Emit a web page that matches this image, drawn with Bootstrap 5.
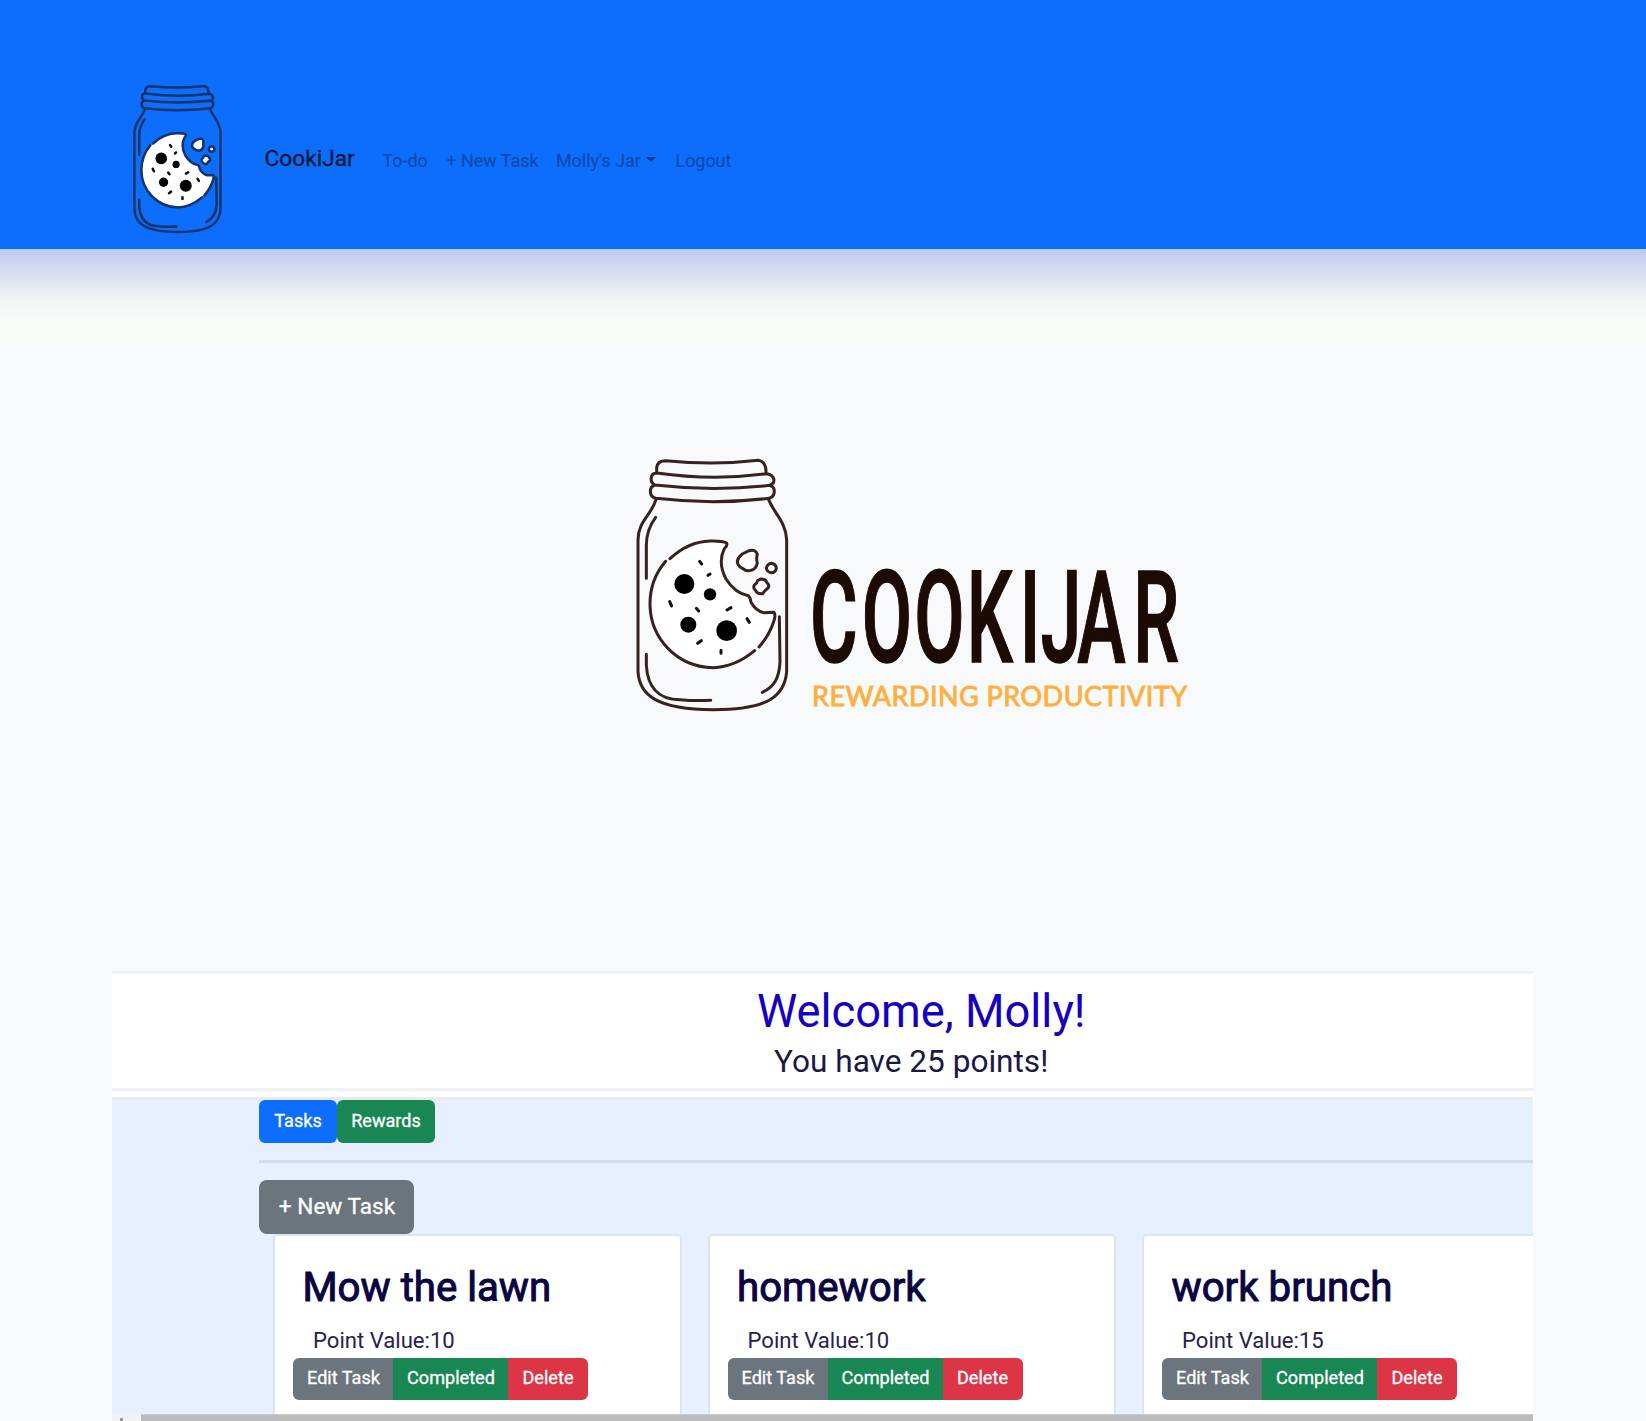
<!DOCTYPE html>
<html lang="en">
<head>
<meta charset="utf-8">
<title>CookiJar</title>
<link href="https://cdn.jsdelivr.net/npm/bootstrap@5.3.0/dist/css/bootstrap.min.css" rel="stylesheet">
<style>
body{font-family:Roboto,"Liberation Sans",sans-serif;background:#f8f9fb;width:1646px;height:1421px;overflow:hidden}
.topbar{height:249px;background:#0d6efd;padding:77px 0 0 124px}
.nav-jar{width:110px;height:164px;color:#173468;--cookie:#fff;--line:13px}
.topbar .navbar-brand{font-size:22.7px;color:#06183a;-webkit-text-stroke:.4px #06183a;margin:0 0 0 30.5px;padding:0;width:118px}
.topbar .nav-link{font-size:17.9px;color:#0c4aae;-webkit-text-stroke:.2px #0c4aae;padding:4px 0 0;white-space:nowrap}
.topbar .nav-link.dropdown-toggle::after{margin-left:5px;border-top-color:#0a3a8c;vertical-align:.25em}
.nav-todo{width:64px}.nav-new{width:109.5px}.nav-jarmenu{width:119.5px}
.shade{height:101px;background:linear-gradient(#c0c9ee 0,#dbe0f2 27%,#e9edf3 40%,#f3f5f6 54%,#f8faf8 68%,#f8faf8 88%,#f8f9fb 100%)}
.hero{height:621px;padding:95px 0 0 620px}
.hero-jar{width:190px;height:280px;color:#35231f;--cookie:#fff;--line:9px}
.wordmark{width:420px;height:190px;margin:95px 0 0 -20px}
.panel{width:1421px;height:450px;margin-left:112px;overflow:hidden}
.welcome{height:117px;border-top:3px solid #eff0f1;background:#fff;padding-top:13px}
.welcome h1{font-size:45.3px;line-height:50px;color:#1602bd;font-weight:400;margin:0 0 6px 645px}
.welcome p{font-size:31.6px;line-height:38px;color:#1c1844;margin:0 0 0 662px}
.divider{height:12px;background:#fdfdfd;border-top:3px solid #eff1f3;border-bottom:3px solid #e7ebf1}
.tasks{height:314px;background:#e6f0ff;padding-left:147px;overflow:hidden}
.tasks .btn{border:0;font-size:18.1px;line-height:40px;height:43px;padding:0 0 2px;border-radius:6px;-webkit-text-stroke:.3px #fff}
.tasks .b-tasks{width:78px}.tasks .b-rewards{width:98px}
.tasks hr{margin:17px 0;border:0;height:3px;background:#d2dded;opacity:1}
.tasks .b-new{display:block;width:155px;height:54px;font-size:22.6px;line-height:53px;border-radius:8px;padding-left:1px}
.deck{gap:26px;padding-left:14px}
.deck .card{width:408.5px;height:200px;flex:none;border:2px solid #dce4ee;border-radius:5px;padding:27px 0 0 18px}
.deck h2{font-size:40.2px;line-height:50px;font-weight:400;color:#0a0440;-webkit-text-stroke:1px #0a0440;margin:0 0 0 9.5px}
.deck p{font-size:22.1px;line-height:28px;color:#27214f;margin:13px 0 4px 20px}
.deck .btn{height:42px}
.deck .btn-group .btn{flex:none;margin:0}
.b-edit{width:101px}.b-done{width:116px}.b-del{width:80px}
.hbar{height:7px;background:#f2f2f3}
.hbar .arrow{width:3px;height:3px;background:#999;margin:4px 0 0 8px}
.hbar .thumb{flex:1;margin-left:18px;background:#bcbbbc;border-top:1px solid #ccc}
</style>
<script src="https://cdn.jsdelivr.net/npm/bootstrap@5.3.0/dist/js/bootstrap.bundle.min.js"></script>
</head>
<body>
<svg width="0" height="0" class="position-absolute">
<symbol id="jar" viewBox="0 0 570 840" preserveAspectRatio="none">
<g fill="none" stroke="currentColor" stroke-linecap="round" stroke-linejoin="round" style="stroke-width:var(--line)">
<path d="M110 84V68Q112 47 137 47Q280 62 415 46Q440 50 438 86M110 84C90 84 88 112 105 120C86 126 86 156 108 160Q280 180 446 160C468 155 468 126 449 121C468 114 466 90 440 86Q280 108 110 84M105 120Q280 140 449 121"/>
<path d="M108 164C94 210 54 230 54 285V680C58 750 110 794 280 794S494 750 500 680V285C498 230 462 205 446 164"/>
<path d="M107 217C90 240 79 264 79 300V400M79 628V660C82 720 110 764 180 764Q220 768 272 766M478 515L480 650C478 700 462 726 427 742"/>
<path d="M320 294Q308 286 272 289A188 188 0 1 0 463 503Q430 505 414 495Q390 480 387 455C350 448 310 415 303 370Q300 325 320 294" fill="var(--cookie)" stroke="none"/>
<path d="M150 341Q205 290 270 288Q307 287 320 294Q323 303 313 311C296 345 304 375 318 402Q345 445 385 452Q392 459 393 472Q407 497 430 503L462 502Q468 511 461 530Q447 572 417 606M404 617Q345 666 280 668C170 666 92 580 90 480Q89 405 137 349"/>
<path d="M385 318Q407 311 412 328Q408 340 412 354Q408 373 393 376Q378 380 369 371Q352 364 352 349Q355 335 367 327ZM454 355Q468 357 469 370Q466 383 454 383Q440 381 439 369Q443 356 454 355ZM423 402Q437 402 440 412Q449 420 445 428Q434 436 428 446Q412 448 407 437Q398 428 403 420Q412 414 413 406Z" fill="var(--cookie)"/>
<path d="M239 349L245 357M264 391L270 387M149 470L155 483M229 490L236 498M321 495L333 488M381 521L388 532M233 595L244 587M303 616V625" stroke="#111"/>
</g>
<g fill="#000"><circle cx="193" cy="417" r="30"/><circle cx="270" cy="448" r="18.500"/><circle cx="205" cy="539" r="24"/><circle cx="320" cy="557" r="31"/></g>
</symbol>
</svg>

<nav class="topbar d-flex align-items-start">
<div class="d-flex align-items-center">
<svg class="nav-jar"><use href="#jar"/></svg>
<a class="navbar-brand" href="#">CookiJar</a>
<div class="nav flex-nowrap">
<a class="nav-link nav-todo" href="#">To-do</a>
<a class="nav-link nav-new" href="#">+ New Task</a>
<a class="nav-link nav-jarmenu dropdown-toggle" href="#">Molly's Jar</a>
<a class="nav-link" href="#">Logout</a>
</div>
</div>
</nav>
<div class="shade"></div>

<header class="hero d-flex align-items-start">
<svg class="hero-jar"><use href="#jar"/></svg>
<svg class="wordmark" viewBox="790 540 420 190" font-family="Roboto, sans-serif">
<g transform="translate(0 662) scale(.57 1)"><text font-size="128" font-weight="500" fill="#1c0a04" stroke="#1c0a04" stroke-width="1.500" x="1421 1512 1604 1696 1789 1826 1890 1988">COOKIJAR</text></g>
<text x="812" y="706" font-family="Lato, sans-serif" font-size="27" fill="#fdb03f" stroke="#fdb03f" stroke-width=".9" textLength="375">REWARDING PRODUCTIVITY</text>
</svg>
</header>

<main class="panel">
<section class="welcome"><h1>Welcome, Molly!</h1><p>You have 25 points!</p></section>
<div class="divider"></div>
<section class="tasks">
<div class="d-flex"><button class="btn btn-primary b-tasks">Tasks</button><button class="btn btn-success b-rewards">Rewards</button></div>
<hr>
<button class="btn btn-secondary b-new">+ New Task</button>
<div class="deck d-flex">
<article class="card"><h2>Mow the lawn</h2><p>Point Value:10</p><div class="btn-group"><button class="btn btn-secondary b-edit">Edit Task</button><button class="btn btn-success b-done">Completed</button><button class="btn btn-danger b-del">Delete</button></div></article>
<article class="card"><h2>homework</h2><p>Point Value:10</p><div class="btn-group"><button class="btn btn-secondary b-edit">Edit Task</button><button class="btn btn-success b-done">Completed</button><button class="btn btn-danger b-del">Delete</button></div></article>
<article class="card"><h2>work brunch</h2><p>Point Value:15</p><div class="btn-group"><button class="btn btn-secondary b-edit">Edit Task</button><button class="btn btn-success b-done">Completed</button><button class="btn btn-danger b-del">Delete</button></div></article>
</div>
</section>
<div class="hbar d-flex"><div class="arrow"></div><div class="thumb"></div></div>
</main>
</body>
</html>
